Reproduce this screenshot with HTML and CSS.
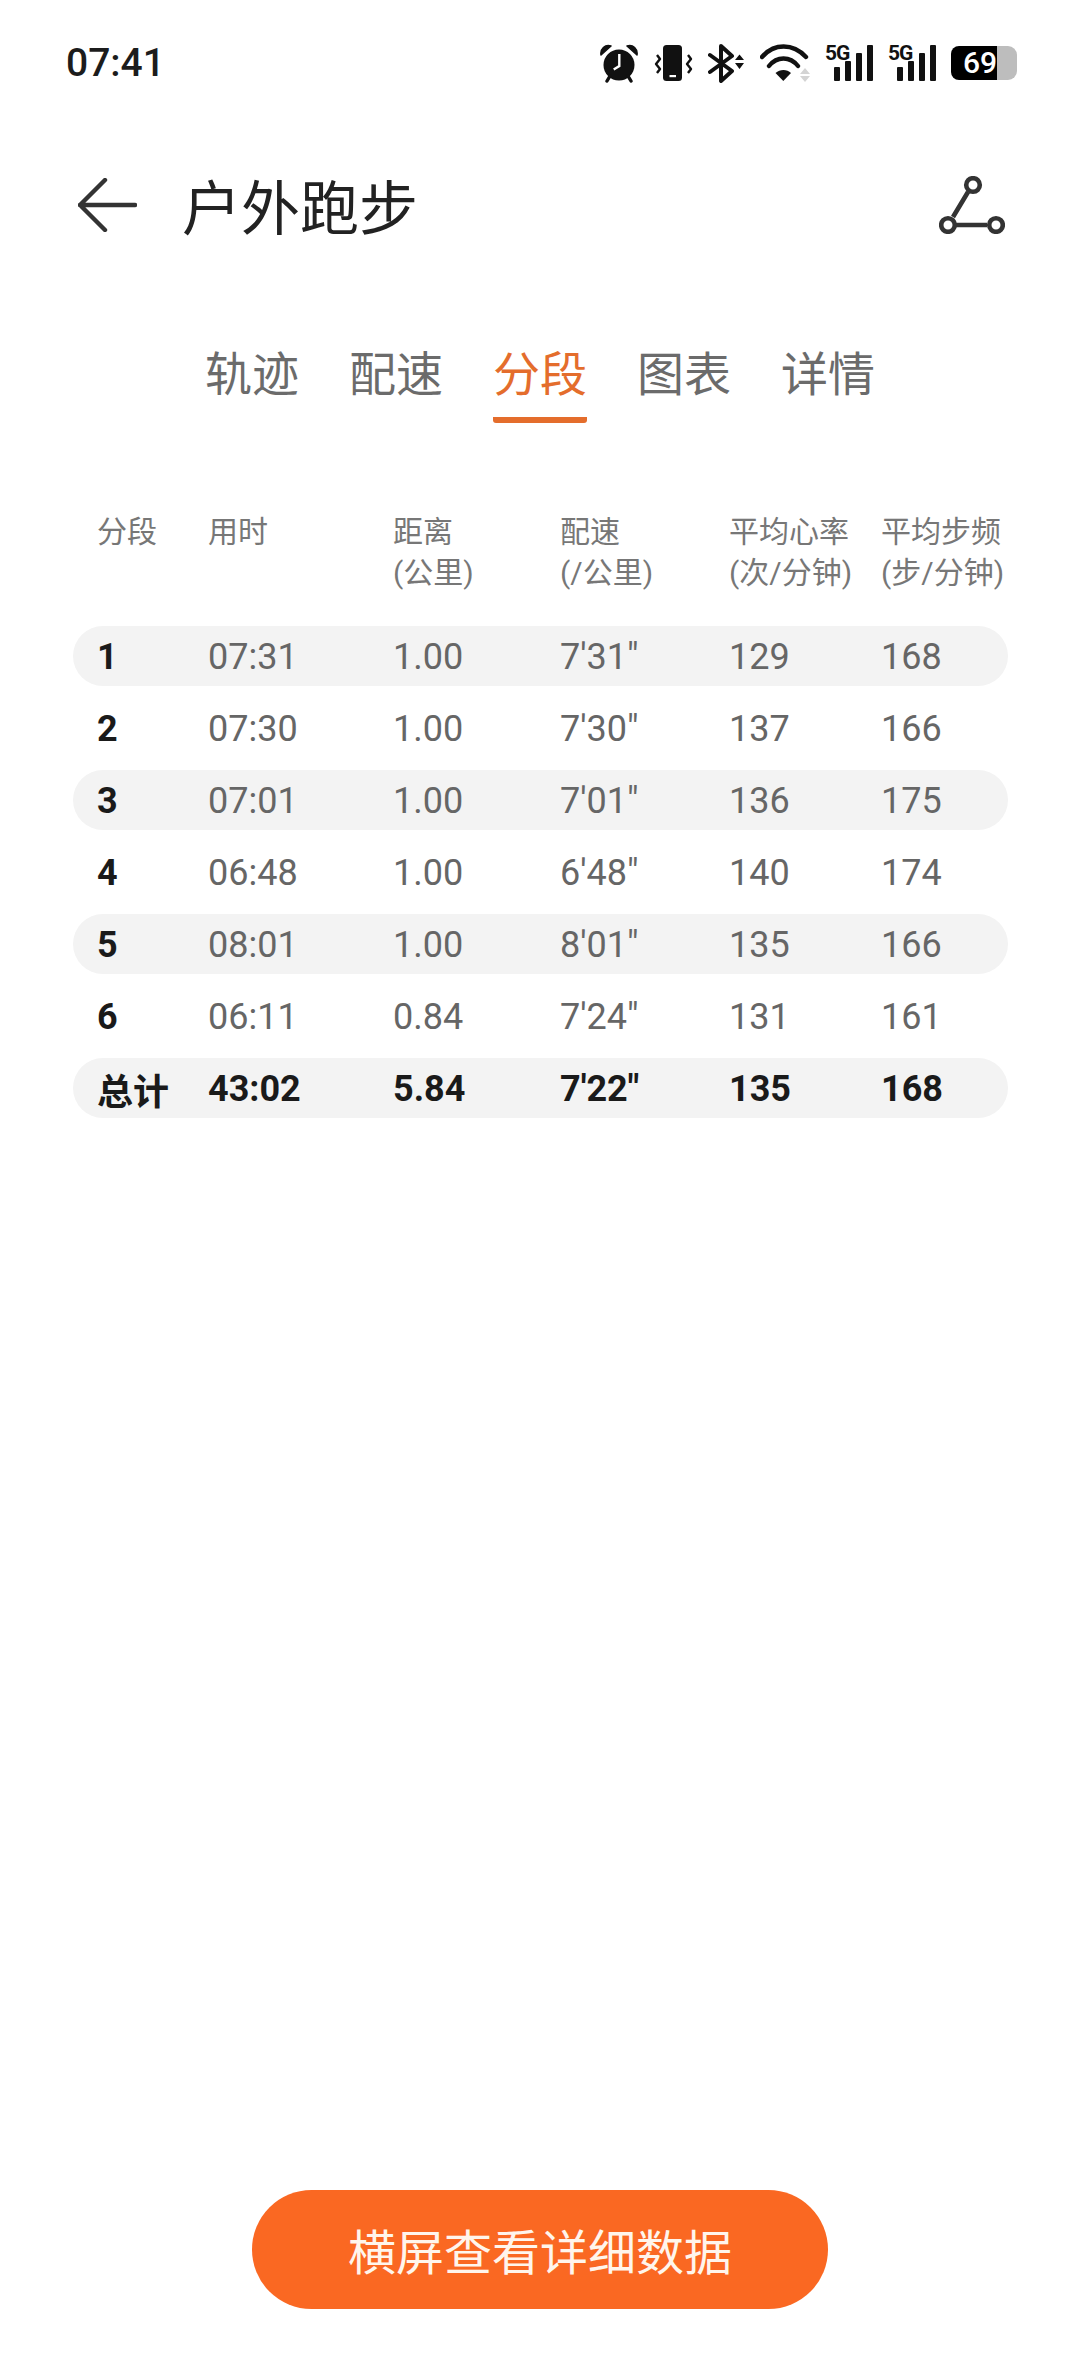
FILE: index.html
```html
<!DOCTYPE html>
<html lang="zh-CN">
<head>
    <meta charset="UTF-8">
    <meta name="viewport" content="width=device-width, initial-scale=1.0">
    <title>户外跑步</title>
    <link rel="stylesheet" href="styles.css">
</head>
<body>
<div class="page">

    <!-- Status bar -->
    <div class="status-bar">
        <span class="clock">07:41</span>
        <div class="status-icons">
            <svg width="39" height="39" viewBox="0 0 39 39">
                <path d="M1 11 C0 5 5 0 11 2 Z M37 11 C38 5 33 0 27 2 Z" fill="#111" stroke="#111" stroke-width="1.5" stroke-linejoin="round"/>
                <circle cx="19" cy="21" r="15.5" fill="#111"/>
                <path d="M19.3 10 V22 L13.7 25.5" fill="none" stroke="#fff" stroke-width="2.4"/>
                <path d="M7 37 L10 32 M31 37 L28 32" stroke="#111" stroke-width="3.4" stroke-linecap="round"/>
            </svg>
            <svg width="39" height="39" viewBox="0 0 39 39">
                <rect x="9" y="1" width="19" height="36" rx="3.5" fill="#111"/>
                <rect x="15.5" y="31" width="6.5" height="2.2" fill="#fff"/>
                <path d="M3 11 L6 15 L2 20 L6 25 L3 29 M34 11 L37 15 L33 20 L37 25 L34 29" fill="none" stroke="#111" stroke-width="2.4" stroke-linejoin="round"/>
            </svg>
            <svg width="37" height="39" viewBox="0 0 37 39">
                <path d="M2 11 L24 27 L13 37 V2 L24 12 L2 28" fill="none" stroke="#111" stroke-width="4" stroke-linejoin="round" stroke-linecap="round"/>
                <path d="M27 16 L31.5 10.5 L36 16 Z M27 19 L36 19 L31.5 25 Z" fill="#111"/>
            </svg>
            <svg width="50" height="39" viewBox="0 0 50 39">
                <path d="M2 13 C14 -1 33 -1 46 13 M9 22 C17 12 30 12 38 22" fill="none" stroke="#111" stroke-width="4.4" stroke-linecap="round"/>
                <path d="M15.5 29 C20 25 27 25 31 29 L23.3 37 Z" fill="#111"/>
                <path d="M40 30 L45 24 L50 30 Z M40 32 L50 32 L45 38 Z" fill="#d4d4d4"/>
            </svg>
            <svg width="48" height="47" viewBox="0 -4 48 47">
                <text x="0" y="16" class="signal-text">5G</text>
                <rect x="9" y="23" width="6" height="14" rx="1" fill="#111"/>
                <rect x="20" y="17" width="6" height="20" rx="1" fill="#111"/>
                <rect x="31" y="9" width="6" height="28" rx="1" fill="#111"/>
                <rect x="42" y="1" width="6" height="36" rx="1" fill="#111"/>
            </svg>
            <svg width="48" height="47" viewBox="0 -4 48 47">
                <text x="0" y="16" class="signal-text">5G</text>
                <rect x="9" y="23" width="6" height="14" rx="1" fill="#111"/>
                <rect x="20" y="17" width="6" height="20" rx="1" fill="#111"/>
                <rect x="31" y="9" width="6" height="28" rx="1" fill="#111"/>
                <rect x="42" y="1" width="6" height="36" rx="1" fill="#111"/>
            </svg>
            <div class="battery">
                <div class="battery-fill">69</div>
                <div class="battery-rest"></div>
            </div>
        </div>
    </div>

    <!-- Title -->
    <div class="nav">
        <svg width="59" height="54" viewBox="0 0 59 54">
            <path d="M27 2 L2 27 L27 52 M2 27 H57" fill="none" stroke="#333" stroke-width="4.4" stroke-linecap="round" stroke-linejoin="round"/>
        </svg>
        <h1 class="nav-title">户外跑步</h1>
        <svg width="66" height="58" viewBox="0 0 66 58">
            <path d="M29 16 L14 41 M17 49 H48" stroke="#333" stroke-width="4.6" fill="none"/>
            <circle cx="34" cy="9" r="6.8" fill="#fff" stroke="#333" stroke-width="4.6"/>
            <circle cx="9" cy="49" r="6.8" fill="#fff" stroke="#333" stroke-width="4.6"/>
            <circle cx="57" cy="49" r="6.8" fill="#fff" stroke="#333" stroke-width="4.6"/>
        </svg>
    </div>

    <!-- Tabs -->
    <div class="tabs">
        <div class="tab">轨迹</div>
        <div class="tab">配速</div>
        <div class="tab active">分段</div>
        <div class="tab">图表</div>
        <div class="tab">详情</div>
    </div>

    <!-- Splits table -->
    <div class="splits">
        <div class="row head">
            <div>分段</div>
            <div>用时</div>
            <div>距离<br>(公里)</div>
            <div>配速<br>(/公里)</div>
            <div>平均心率<br>(次/分钟)</div>
            <div>平均步频<br>(步/分钟)</div>
        </div>
        <div class="row shaded">
            <div class="num">1</div><div>07:31</div><div>1.00</div><div>7'31"</div><div>129</div><div>168</div>
        </div>
        <div class="row">
            <div class="num">2</div><div>07:30</div><div>1.00</div><div>7'30"</div><div>137</div><div>166</div>
        </div>
        <div class="row shaded">
            <div class="num">3</div><div>07:01</div><div>1.00</div><div>7'01"</div><div>136</div><div>175</div>
        </div>
        <div class="row">
            <div class="num">4</div><div>06:48</div><div>1.00</div><div>6'48"</div><div>140</div><div>174</div>
        </div>
        <div class="row shaded">
            <div class="num">5</div><div>08:01</div><div>1.00</div><div>8'01"</div><div>135</div><div>166</div>
        </div>
        <div class="row">
            <div class="num">6</div><div>06:11</div><div>0.84</div><div>7'24"</div><div>131</div><div>161</div>
        </div>
        <div class="row shaded total">
            <div>总计</div><div>43:02</div><div>5.84</div><div>7'22"</div><div>135</div><div>168</div>
        </div>
    </div>

    <div class="landscape-btn">横屏查看详细数据</div>

</div>
</body>
</html>
```

FILE: styles.css
```css
body {
    margin: 0;
    background-color: #fff;
    font-family: Roboto, "Noto Sans CJK SC", sans-serif;
}
.page {
    height: 2376px;
    display: flex;
    flex-direction: column;
    overflow: hidden;
}

/* Status bar */
.status-bar {
    height: 126px;
    padding: 0 63px 0 66px;
    display: flex;
    justify-content: space-between;
    align-items: center;
}
.clock {
    font-size: 39px;
    font-weight: 500;
    color: #1c1c1c;
}
.status-icons {
    display: flex;
    align-items: center;
    gap: 15px;
}
.signal-text {
    font-family: Roboto, sans-serif;
    font-size: 21px;
    font-weight: 700;
    letter-spacing: -1px;
    fill: #111;
}
.battery {
    width: 66px;
    height: 34px;
    display: flex;
}
.battery-fill {
    width: 46px;
    background-color: #000;
    border-radius: 8px 0 0 8px;
    color: #fff;
    font-size: 30px;
    font-weight: 500;
    line-height: 34px;
    text-align: right;
}
.battery-rest {
    width: 20px;
    background-color: #bdbdbd;
    border-radius: 0 9px 9px 0;
}

/* Title */
.nav {
    margin-top: 29px;
    height: 100px;
    padding: 0 75px 0 78px;
    display: flex;
    justify-content: flex-start;
    align-items: center;
}
.nav-title {
    margin: 0 auto 2px 45px;
    font-size: 59px;
    font-weight: 400;
    color: #222;
    font-family: "Noto Sans CJK SC", sans-serif;
}

/* Tabs */
.tabs {
    margin-top: 85px;
    display: flex;
    justify-content: center;
    gap: 50px;
}
.tab {
    height: 83px;
    font-family: "Noto Sans CJK SC", sans-serif;
    font-size: 47px;
    line-height: 61px;
    color: #6b6b6b;
    box-sizing: border-box;
}
.tab.active {
    color: #e46d2c;
    border-bottom: 6px solid #e46d2c;
    border-radius: 0 0 3px 3px;
}

/* Splits table */
.splits {
    margin-top: 88px;
    padding: 0 72px 0 73px;
    display: flex;
    flex-direction: column;
    gap: 12px;
}
.row {
    height: 60px;
    padding: 2px 0 0 24px;
    box-sizing: border-box;
    display: grid;
    grid-template-columns: 111px 185px 167px 169px 152px 1fr;
    align-items: center;
    border-radius: 30px;
    font-size: 36px;
    color: #666;
}
.row.shaded {
    background-color: #f3f3f3;
}
.row.head {
    height: 103px;
    padding-top: 0;
    align-items: start;
    font-size: 30px;
    line-height: 41px;
    color: #777;
    white-space: nowrap;
}
.num {
    font-weight: 700;
    color: #1a1a1a;
}
.row.total {
    font-weight: 700;
    color: #1a1a1a;
}

/* Bottom button */
.landscape-btn {
    margin: auto auto 67px;
    width: 576px;
    height: 119px;
    border-radius: 60px;
    background-color: #fa6822;
    color: #fff5ec;
    font-family: "Noto Sans CJK SC", sans-serif;
    font-size: 48px;
    line-height: 119px;
    text-align: center;
}
```
